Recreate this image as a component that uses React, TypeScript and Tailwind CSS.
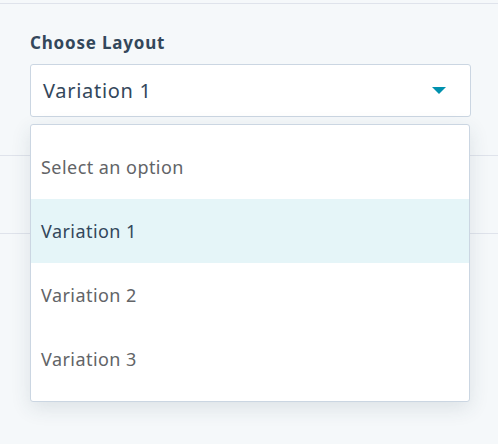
import { useState } from 'react';

const opciones = ['Variation 1', 'Variation 2', 'Variation 3'];

export default function App() {
    const [seleccion] = useState('Variation 1');

    return (
        <div className="relative w-[498px] h-[444px] overflow-hidden bg-[#f5f8fa]" style={{ fontFamily: '"Noto Sans", sans-serif' }}>
            <div className="mt-[3px] border-t border-[#dfe3eb]" />

            {/* fondo: lineas del panel detras del menu */}
            <div className="absolute left-0 right-0 top-[155px] border-t border-[#dfe3eb]" />
            <div className="absolute left-0 right-0 top-[233px] border-t border-[#dfe3eb]" />

            <div className="relative pl-[30px] pr-[27px] pt-[28px]">
                <label className="block text-[17px] leading-[22px] font-bold tracking-[0.8px] text-[#33475b] mb-[10px]">Choose Layout</label>
                <div className="relative">
                    <div className="flex items-center justify-between h-[53px] bg-white border border-[#cbd6e2] rounded-[3px] pl-[12px] pr-[24px]">
                        <span className="text-[20px] tracking-[0.7px] text-[#33475b]">{seleccion}</span>
                        <svg width="14" height="7" viewBox="0 0 14 7">
                            <path d="M0 0 L14 0 L7 7 Z" fill="#0091ae" />
                        </svg>
                    </div>

                    <div className="absolute left-0 top-full mt-[7px] w-[440px] flex flex-col bg-white border border-[#cbd6e2] rounded-[3px] pt-[10px] pb-[10px] shadow-[0_6px_20px_rgba(45,62,80,0.12)]">
                        <div className="h-[64px] flex items-center px-[10px] text-[18px] tracking-[0.45px] text-[#626467]">Select an option</div>
                        {opciones.map(op => (
                            <div
                                key={op}
                                className={
                                    op === seleccion
                                        ? 'h-[64px] flex items-center px-[10px] text-[18px] tracking-[0.45px] text-[#33475b] bg-[#e5f5f8]'
                                        : 'h-[64px] flex items-center px-[10px] text-[18px] tracking-[0.45px] text-[#626467]'
                                }
                            >
                                {op}
                            </div>
                        ))}
                    </div>
                </div>
            </div>
        </div>
    );
}
